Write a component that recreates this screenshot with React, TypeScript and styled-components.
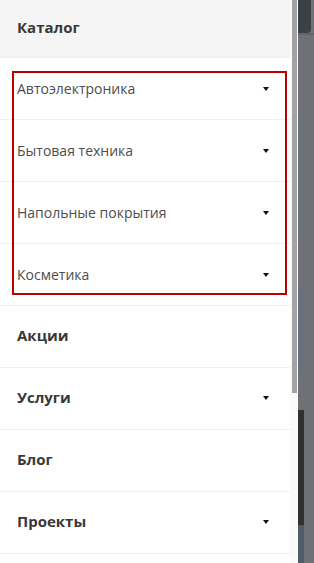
import React from "react";
import styled, { createGlobalStyle } from "styled-components";

const Global = createGlobalStyle`
  html, body { margin: 0; padding: 0; }
  body { font-family: "Open Sans", "Noto Sans", sans-serif; overflow: hidden; }
  #root { height: 563px; }
`;

const Page = styled.div`
  display: flex;
  height: 563px;
  width: 314px;
  overflow: hidden;
`;

const Drawer = styled.div`
  display: flex;
  width: 298px;
  flex: none;
  background: #fff;
`;

const Menu = styled.nav`
  position: relative;
  width: 290px;
  display: flex;
  flex-direction: column;
`;

const Header = styled.div`
  height: 58px;
  box-sizing: border-box;
  background: #f5f5f5;
  border-bottom: 1px solid #efefef;
  display: flex;
  align-items: center;
  padding: 0 0 4px 17px;
  font-size: 15px;
  font-weight: 700;
  color: #383838;
`;

const Row = styled.div<{ $bold?: boolean }>`
  height: 62px;
  box-sizing: border-box;
  border-bottom: 1px solid #efefef;
  display: flex;
  align-items: center;
  justify-content: space-between;
  padding: 0 21px ${(p) => (p.$bold ? "3px" : "1px")} 17px;
  font-size: ${(p) => (p.$bold ? "15px" : "14px")};
  font-weight: ${(p) => (p.$bold ? 700 : 400)};
  color: ${(p) => (p.$bold ? "#383838" : "#4d4d4d")};
`;

const Caret = styled.span`
  width: 0;
  height: 0;
  border-top: 4px solid #111;
  border-left: 3px solid transparent;
  border-right: 3px solid transparent;
  margin-top: 2px;
`;

const Highlight = styled.div`
  position: absolute;
  left: 12px;
  top: 71px;
  width: 275px;
  height: 224px;
  box-sizing: border-box;
  border: 2px solid #bb0000;
  pointer-events: none;
`;

const Scrollbar = styled.div`
  width: 8px;
  flex: none;
  background: #fafafa;
  display: flex;
  justify-content: flex-start;
  padding-left: 2px;
  box-sizing: border-box;
`;

const Thumb = styled.div`
  width: 5px;
  height: 393px;
  background: #a3a3a3;
`;

const Backdrop = styled.div`
  flex: 1;
  background: #6e7175;
  display: flex;
  flex-direction: column;
`;

const Block = styled.div<{ $h: number; $c: string; $w?: number; $r?: boolean }>`
  height: ${(p) => p.$h}px;
  width: ${(p) => (p.$w ? `${p.$w}px` : "100%")};
  background: ${(p) => p.$c};
  border-radius: ${(p) => (p.$r ? "0 0 4px 0" : "0")};
  flex: none;
`;

const sub = ["Автоэлектроника", "Бытовая техника", "Напольные покрытия", "Косметика"];
const main: { t: string; c: boolean }[] = [
  { t: "Акции", c: false },
  { t: "Услуги", c: true },
  { t: "Блог", c: false },
  { t: "Проекты", c: true },
];

export default function App() {
  return (
    <>
      <Global />
      <Page>
        <Drawer>
          <Menu>
            <Header>Каталог</Header>
            {sub.map((s) => (
              <Row key={s}>
                <span>{s}</span>
                <Caret />
              </Row>
            ))}
            {main.map((m) => (
              <Row key={m.t} $bold>
                <span>{m.t}</span>
                {m.c && <Caret />}
              </Row>
            ))}
            <Highlight />
          </Menu>
          <Scrollbar>
            <Thumb />
          </Scrollbar>
        </Drawer>
        <Backdrop>
          <Block $h={33} $w={13} $c="#3c4148" $r />
          <Block $h={2} $c="#62666a" />
          <Block $h={85} $c="#6e7175" />
          <Block $h={120} $w={6} $c="#6b7279" />
          <Block $h={50} $c="#6e7175" />
          <Block $h={80} $w={6} $c="#66717b" />
          <Block $h={40} $c="#6e7175" />
          <Block $h={115} $w={6} $c="#2f3030" />
          <Block $h={38} $w={6} $c="#4f5b66" />
        </Backdrop>
      </Page>
    </>
  );
}
